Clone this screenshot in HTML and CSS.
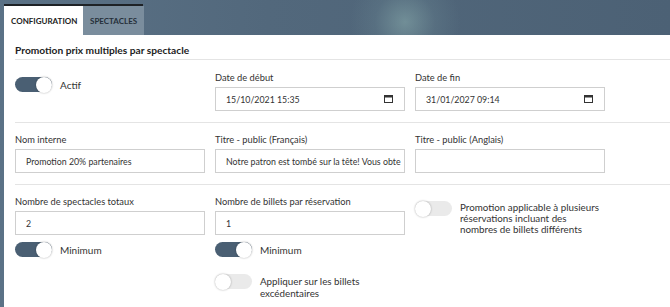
FILE: index.html
```html
<!DOCTYPE html>
<html lang="fr">
<head>
<meta charset="utf-8">
<link rel="stylesheet" href="styles.css">
</head>
<body>
<div class="page">
  <div class="tabs">
    <div class="tab active">CONFIGURATION</div>
    <div class="tab">SPECTACLES</div>
  </div>
  <div class="panel">
    <div class="title">Promotion prix multiples par spectacle</div>

    <div class="row row1">
      <div class="col">
        <div class="switch-line first">
          <span class="toggle on"></span><span class="switch-text">Actif</span>
        </div>
      </div>
      <div class="col">
        <div class="label">Date de début</div>
        <div class="input date"><span>15/10/2021 15:35</span>
          <svg class="cal" width="9" height="8" viewBox="0 0 9 8"><rect x="0.5" y="0.5" width="8" height="7" fill="none" stroke="#333" stroke-width="1"/><rect x="0" y="0" width="9" height="2.5" fill="#333"/></svg>
        </div>
      </div>
      <div class="col">
        <div class="label">Date de fin</div>
        <div class="input date"><span>31/01/2027 09:14</span>
          <svg class="cal" width="9" height="8" viewBox="0 0 9 8"><rect x="0.5" y="0.5" width="8" height="7" fill="none" stroke="#333" stroke-width="1"/><rect x="0" y="0" width="9" height="2.5" fill="#333"/></svg>
        </div>
      </div>
    </div>

    <div class="row">
      <div class="col">
        <div class="label">Nom interne</div>
        <div class="input"><span>Promotion 20% partenaires</span></div>
      </div>
      <div class="col">
        <div class="label">Titre - public (Français)</div>
        <div class="input"><span>Notre patron est tombé sur la tête! Vous obte</span></div>
      </div>
      <div class="col">
        <div class="label">Titre - public (Anglais)</div>
        <div class="input"><span></span></div>
      </div>
    </div>

    <div class="row last">
      <div class="col">
        <div class="label">Nombre de spectacles totaux</div>
        <div class="input"><span>2</span></div>
        <div class="switch-line">
          <span class="toggle on"></span><span class="switch-text">Minimum</span>
        </div>
      </div>
      <div class="col">
        <div class="label">Nombre de billets par réservation</div>
        <div class="input"><span>1</span></div>
        <div class="switch-line">
          <span class="toggle on"></span><span class="switch-text">Minimum</span>
        </div>
        <div class="switch-line extra">
          <span class="toggle"></span><span class="switch-text multi">Appliquer sur les billets<br>excédentaires</span>
        </div>
      </div>
      <div class="col">
        <div class="switch-line top">
          <span class="toggle"></span><span class="switch-text multi tight">Promotion applicable à plusieurs<br>réservations incluant des<br>nombres de billets différents</span>
        </div>
      </div>
    </div>
  </div>
</div>
</body>
</html>
```

FILE: styles.css
```css
* { box-sizing: border-box; }
html, body { margin: 0; height: 100%; }
body {
  font-family: "Lato", "Open Sans", sans-serif;
  color: #333;
  background:
    radial-gradient(circle at 405px 22px, rgba(140, 175, 175, 0.55) 0, rgba(110, 140, 150, 0.25) 30px, rgba(80, 100, 120, 0) 55px),
    linear-gradient(90deg, #5b7286 0%, #52687c 40%, #4c6175 100%);
  overflow: hidden;
}
.page {
  padding: 4px 0 0 4px;
  height: 100%;
  display: flex;
  flex-direction: column;
}
.tabs {
  display: flex;
  width: 139px;
  border-top: 2px solid #1e2226;
}
.tab {
  height: 29px;
  display: flex;
  align-items: center;
  font-size: 8px;
  font-weight: 700;
  color: #26303a;
  background: #7a8d9d;
  padding: 0 7px;
  flex: 1;
}
.tab.active {
  background: #fff;
  color: #222;
  flex: none;
  width: 79px;
}
.panel {
  flex: 1;
  background: #fff;
  padding-left: 11px;
}
.title {
  font-size: 10.2px;
  font-weight: 700;
  color: #222;
  height: 25px;
  padding-top: 9px;
  border-bottom: 1px solid #e4e4e4;
}
.row {
  display: grid;
  grid-template-columns: 200px 200px 200px;
  padding: 10px 0 11px;
  border-bottom: 1px solid #e4e4e4;
}
.row.row1 { padding-top: 11px; }
.row.last { border-bottom: none; }
.col { width: 190px; }
.label {
  font-size: 9.3px;
  line-height: 14px;
  height: 14px;
  color: #333;
  margin-bottom: 2px;
}
.input {
  height: 24px;
  border: 1px solid #cfcfcf;
  display: flex;
  align-items: center;
  padding: 0 2px 0 10px;
  font-size: 8.8px;
  color: #333;
  overflow: hidden;
  white-space: nowrap;
}
.input span { flex: 1; overflow: hidden; }
.input.date .cal { flex: none; margin-right: 9px; }
.switch-line {
  display: flex;
  align-items: center;
  margin-top: 7px;
  white-space: nowrap;
}
.switch-line.first { margin-top: 6px; }
.switch-line.extra { margin-top: 17px; align-items: flex-start; }
.switch-line.top { margin-top: 6px; align-items: flex-start; }
.toggle {
  position: relative;
  display: inline-block;
  width: 37px;
  height: 15px;
  border-radius: 8px;
  background: #eaeaea;
  flex: none;
}
.toggle::after {
  content: "";
  position: absolute;
  top: -0.5px;
  left: 0;
  width: 16px;
  height: 16px;
  border-radius: 50%;
  background: #fff;
  box-shadow: 0 0 2px rgba(0,0,0,0.35);
}
.toggle.on { background: #4a5f73; }
.toggle.on::after { left: 21px; }
.switch-text {
  margin-left: 8px;
  font-size: 10px;
  color: #333;
}
.switch-text.multi { line-height: 12px; font-size: 9.8px; margin-top: 1px; }
.switch-text.tight { line-height: 11px; margin-top: 1px; }
```
